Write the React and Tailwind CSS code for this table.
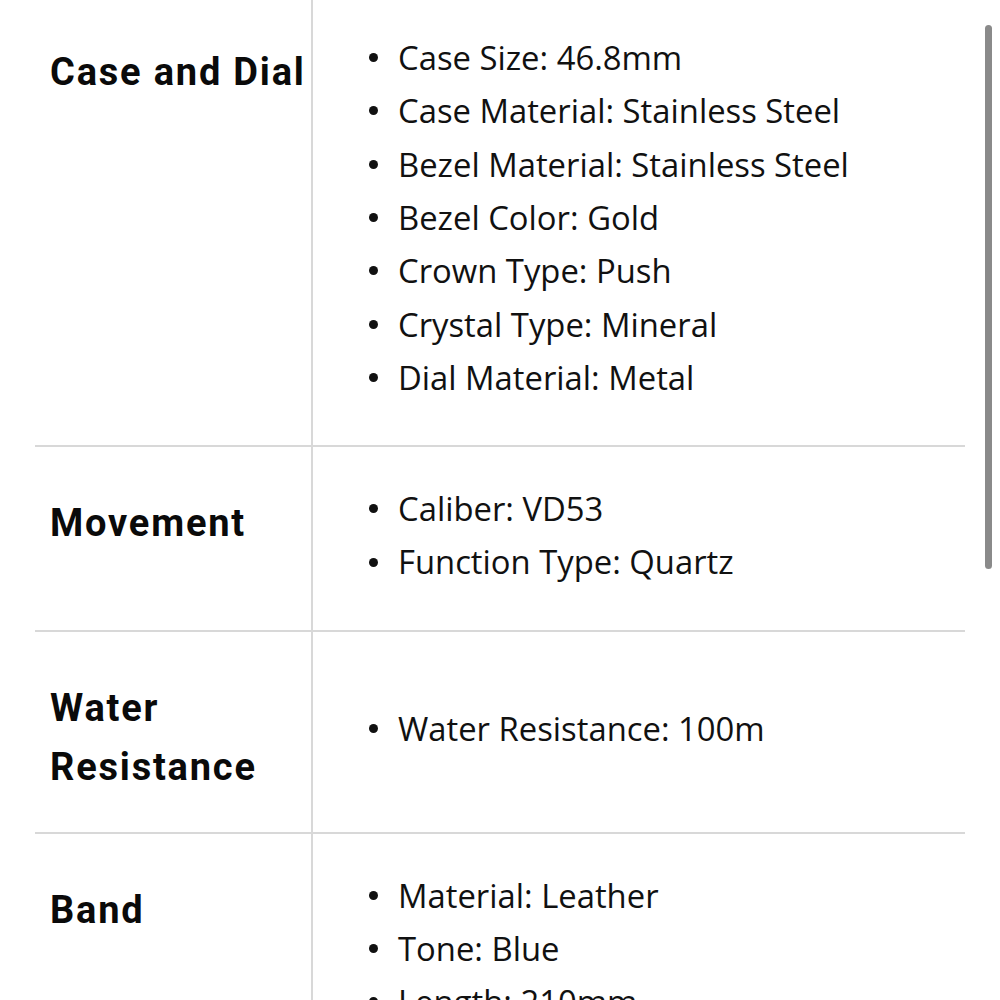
import React from 'react';

const specs = [
    {
        label: ['Case and Dial'],
        items: [
            'Case Size: 46.8mm',
            'Case Material: Stainless Steel',
            'Bezel Material: Stainless Steel',
            'Bezel Color: Gold',
            'Crown Type: Push',
            'Crystal Type: Mineral',
            'Dial Material: Metal',
        ],
    },
    {
        label: ['Movement'],
        items: ['Caliber: VD53', 'Function Type: Quartz'],
    },
    {
        label: ['Water', 'Resistance'],
        items: ['Water Resistance: 100m'],
    },
    {
        label: ['Band'],
        items: ['Material: Leather', 'Tone: Blue', 'Length: 210mm'],
    },
];

function SpecRow({spec, last}) {
    return (
        <div className={`flex ${last ? '' : 'border-b-2 border-[#d8d8d8]'}`}>
            <div className="w-[278px] shrink-0 border-r-2 border-[#d8d8d8] pl-[15px] pt-[47px] pb-[35px]">
                {spec.label.map((line) => (
                    <div
                        key={line}
                        className="font-['Roboto',sans-serif] font-bold text-[38px] leading-[59px] tracking-[1.8px] text-[#0a0a0a] whitespace-nowrap"
                    >
                        {line}
                    </div>
                ))}
            </div>
            <div className="flex-1 self-center pt-[35px] pb-[41px]">
                <ul>
                    {spec.items.map((item) => (
                        <li key={item} className="flex items-center h-[53.3px]">
                            <span className="w-[9px] h-[9px] rounded-full bg-[#111] ml-[56px] mr-[20px] shrink-0"/>
                            <span className="font-['Open_Sans',sans-serif] text-[32.8px] text-[#111] whitespace-nowrap">
                                {item}
                            </span>
                        </li>
                    ))}
                </ul>
            </div>
        </div>
    );
}

export default function App() {
    return (
        <div className="relative w-[1000px] h-[1000px] overflow-hidden bg-white">
            <div className="mx-[35px] -mt-[4px]">
                {specs.map((spec, i) => (
                    <SpecRow key={i} spec={spec} last={i === specs.length - 1}/>
                ))}
            </div>
            <div className="absolute left-[985px] top-[25px] w-[7px] h-[544px] rounded-full bg-[#8a8a8a]"/>
        </div>
    );
}
